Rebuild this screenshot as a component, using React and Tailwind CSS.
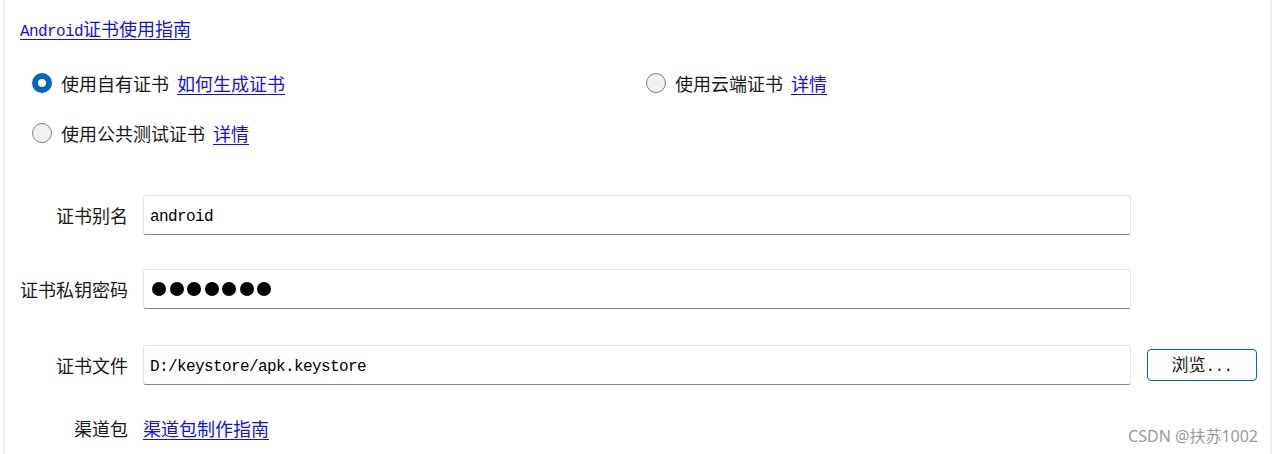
const cjk = "font-['Noto_Sans_CJK_SC','Noto_Sans',sans-serif]";
const mono = "font-['Liberation_Mono','Noto_Sans_CJK_SC',monospace] text-[16px] tracking-[-0.6px]";

function Radio({ checked }) {
  if (checked) {
    return (
      <span className="flex h-[20px] w-[20px] shrink-0 items-center justify-center rounded-full bg-[#0067c0]">
        <span className="h-[8px] w-[8px] rounded-full bg-white" />
      </span>
    );
  }
  return <span className="h-[20px] w-[20px] shrink-0 rounded-full border border-[#808080] bg-[#f1f1f1]" />;
}

function Link({ children, className = "" }) {
  return <a href="#" className={`text-[#1010f0] underline underline-offset-[3px] ${className}`}>{children}</a>;
}

function Option({ checked, label, link }) {
  return (
    <label className="flex h-[30px] items-center">
      <Radio checked={checked} />
      <span className="ml-[9px] text-[#1a1a1a]">{label}</span>
      <Link className="ml-[8px]">{link}</Link>
    </label>
  );
}

function Field({ label, children, extra }) {
  return (
    <div className="flex items-center">
      <div className="w-[108px] text-right text-[#1a1a1a]">{label}</div>
      <div className="ml-[15px] flex h-[40px] w-[988px] items-center rounded-[3px] border border-[#e5e5e5] border-b-[#868686] bg-white px-[6px]">
        {children}
      </div>
      {extra}
    </div>
  );
}

export default function App() {
  return (
    <div className={`relative ml-[3px] h-[454px] w-[1269px] overflow-hidden border-x-2 border-[#efefef] bg-white text-[18px] leading-[24px] ${cjk}`}>
      <div className="pl-[15px] pt-[18px]">
        <div className="flex h-[24px] items-center">
          <Link>
            <span className={mono}>Android</span>证书使用指南
          </Link>
        </div>

        <div className="ml-[12px] mt-[26px] grid grid-cols-[614px_1fr] gap-y-[20px]">
          <Option checked label="使用自有证书" link="如何生成证书" />
          <Option label="使用云端证书" link="详情" />
          <Option label="使用公共测试证书" link="详情" />
        </div>

        <div className="mt-[47px] flex flex-col">
          <Field label="证书别名">
            <span className={`${mono} pt-[3px] text-black`}>android</span>
          </Field>
          <div className="mt-[34px]">
            <Field label="证书私钥密码">
              <span className="flex gap-[3.5px] pl-[2px]">
                {Array.from({ length: 7 }).map((_, i) => (
                  <span key={i} className="h-[14px] w-[14px] rounded-full bg-black" />
                ))}
              </span>
            </Field>
          </div>
          <div className="mt-[36px]">
            <Field
              label="证书文件"
              extra={
                <button className="ml-[16px] h-[32px] w-[110px] rounded-[4px] border border-[#0067c0] bg-[#fdfdfd] text-center text-[17px] text-[#1a1a1a]">
                  <span>浏览<span className={mono}>...</span></span>
                </button>
              }
            >
              <span className={`${mono} pt-[3px] text-black`}>D:/keystore/apk.keystore</span>
            </Field>
          </div>
          <div className="mt-[31px] flex h-[24px] items-center">
            <div className="w-[108px] text-right text-[#1a1a1a]">渠道包</div>
            <Link className="ml-[15px]">渠道包制作指南</Link>
          </div>
        </div>
      </div>

      <div className="absolute bottom-[6px] right-[12px] font-['Noto_Sans','Noto_Sans_CJK_SC',sans-serif] text-[16px] text-[#9a9a9a]">
        CSDN @扶苏1002
      </div>
    </div>
  );
}
